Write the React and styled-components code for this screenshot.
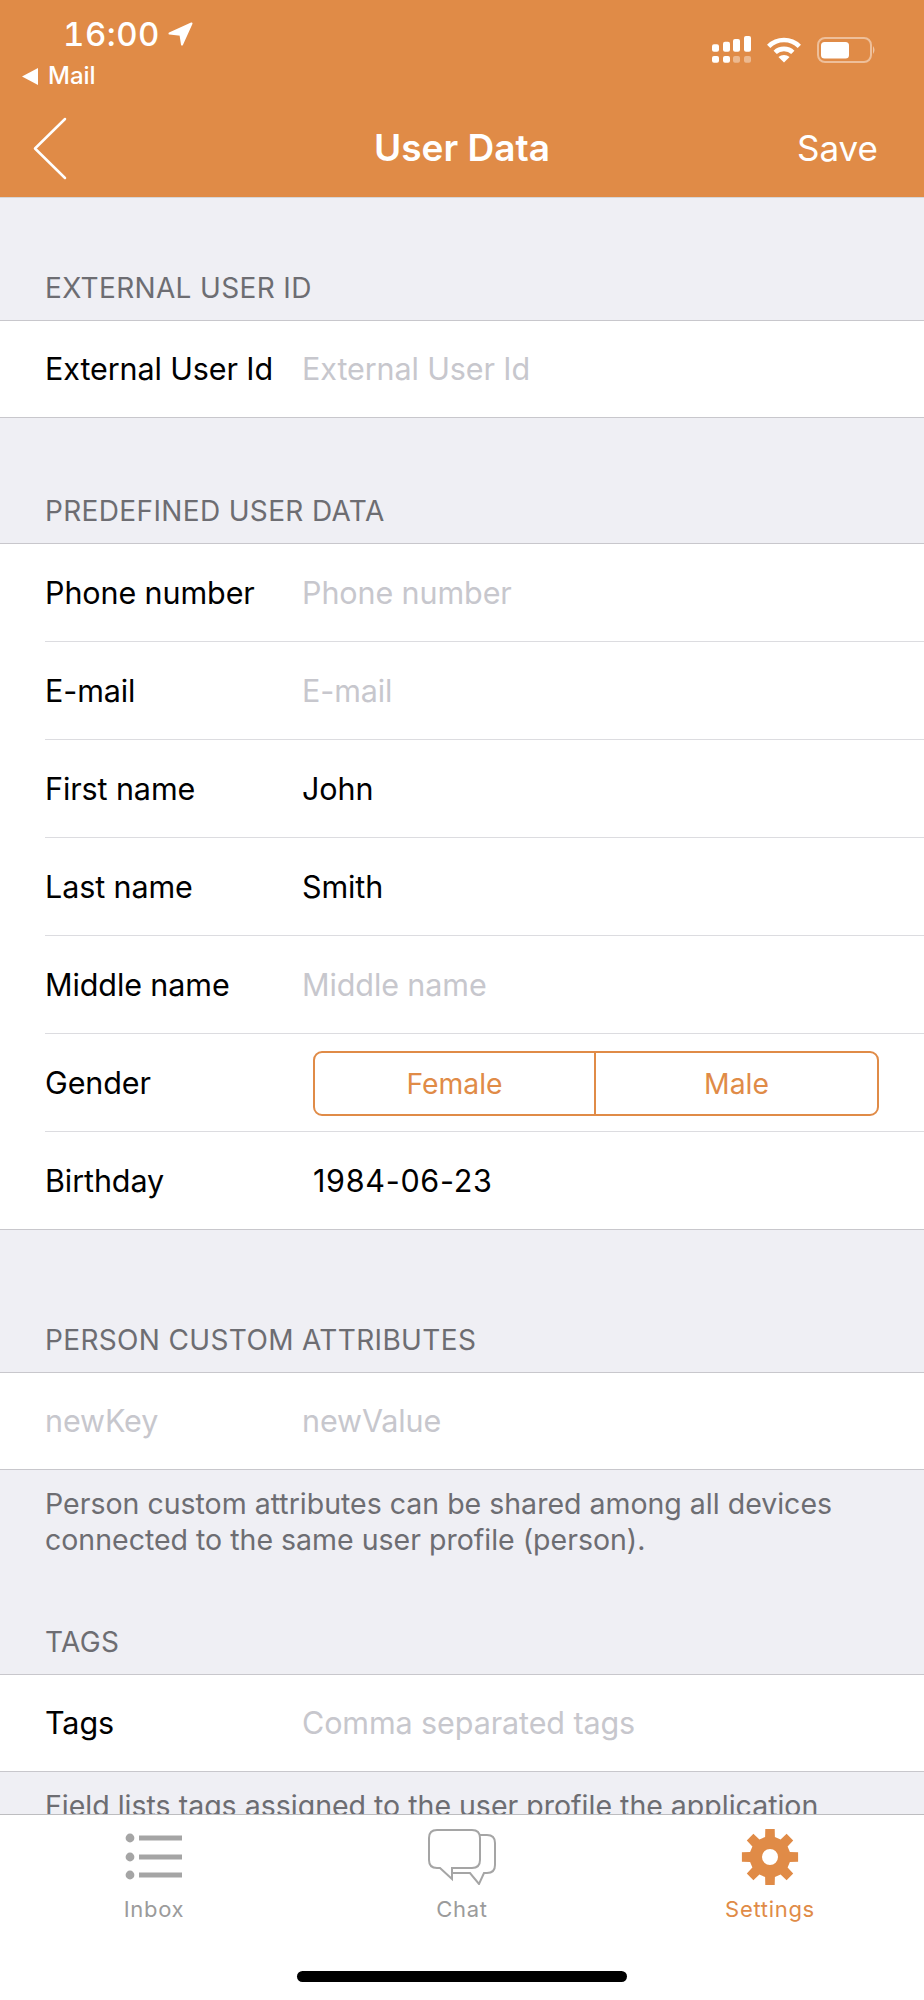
import React from "react";
import styled, { createGlobalStyle } from "styled-components";

const GlobalStyle = createGlobalStyle`
  html, body { margin: 0; padding: 0; background: #fff; }
  body { font-family: Inter, "Liberation Sans", sans-serif; }
`;

const orange = "#e08b47";

const Screen = styled.div`
  width: 924px;
  height: 2000px;
  display: flex;
  flex-direction: column;
  overflow: hidden;
  background: #efeff4;
`;

const Header = styled.header`
  height: 198px;
  flex: none;
  background: ${orange};
  color: #fff;
  border-bottom: 1px solid #d6d6d8;
  box-sizing: border-box;
  display: flex;
  flex-direction: column;
`;

const StatusBar = styled.div`
  height: 99px;
  flex: none;
  display: flex;
  justify-content: space-between;
`;

const TimeCol = styled.div`
  padding: 15px 0 0 22px;
`;

const Time = styled.div`
  display: flex;
  align-items: center;
  gap: 8px;
  padding-left: 41px;
  font-size: 33px;
  line-height: 38px;
  font-weight: 500;
  letter-spacing: 0.5px;
  font-variant-numeric: tabular-nums;
`;

const BackApp = styled.div`
  display: flex;
  align-items: center;
  gap: 10px;
  margin-top: 10px;
  font-size: 24px;
  line-height: 26px;
  font-weight: 500;
`;

const StatusIcons = styled.div`
  display: flex;
  align-items: center;
  gap: 15px;
  height: 27px;
  padding: 36px 48px 0 0;
`;

const NavBar = styled.div`
  flex: 1;
  display: flex;
  align-items: center;
  justify-content: space-between;
  padding: 0 46px 0 33px;
  position: relative;
`;

const NavTitle = styled.div`
  position: absolute;
  left: 0;
  right: 0;
  top: 28px;
  text-align: center;
  font-size: 37px;
  line-height: 42px;
  font-weight: 600;
`;

const SaveLabel = styled.div`
  font-size: 35px;
  line-height: 42px;
`;

const Content = styled.main`
  flex: 1;
  overflow: hidden;
`;

const SectionLabel = styled.div`
  height: ${(p) => p.$height}px;
  box-sizing: border-box;
  display: flex;
  align-items: flex-end;
  padding: 0 45px 16px;
  font-size: 28px;
  line-height: 32px;
  color: #6d6d72;
  letter-spacing: 0.35px;
`;

const Group = styled.div`
  background: #fff;
  border-top: 1px solid #c8c7cc;
  border-bottom: 1px solid #c8c7cc;
`;

const Row = styled.div`
  height: ${(p) => (p.$tall ? 97 : 96)}px;
  box-sizing: border-box;
  display: flex;
  align-items: center;
  margin-left: 45px;
  padding-bottom: 1px;
  & + & {
    border-top: 1px solid #dcdce0;
    height: 98px;
  }
`;

const Label = styled.div`
  width: 257px;
  flex: none;
  font-size: 30.5px;
  letter-spacing: -0.1px;
  color: ${(p) => (p.$placeholder ? "#c7c7cd" : "#000")};
`;

const Value = styled.div`
  font-size: 30.5px;
  letter-spacing: ${(p) => (p.$inset ? "0.7px" : "-0.1px")};
  color: ${(p) => (p.$placeholder ? "#c7c7cd" : "#000")};
  padding-left: ${(p) => (p.$inset ? "11px" : "0")};
`;

const Segments = styled.div`
  margin: 3px 0 0 11px;
  width: 566px;
  height: 65px;
  box-sizing: border-box;
  display: grid;
  grid-template-columns: 279px 1fr;
  border: 2px solid ${orange};
  border-radius: 9px;
`;

const Segment = styled.div`
  display: flex;
  align-items: center;
  justify-content: center;
  font-size: 28.3px;
  color: ${orange};
  & + & {
    border-left: 2px solid ${orange};
  }
`;

const Note = styled.div`
  padding: 16px 45px 0;
  font-size: 28.5px;
  line-height: 36px;
  color: #6d6d72;
`;

const TabBar = styled.nav`
  height: 186px;
  flex: none;
  box-sizing: border-box;
  background: #fff;
  border-top: 1px solid #bdbdc0;
  position: relative;
  display: grid;
  grid-template-columns: repeat(3, 1fr);
`;

const Tab = styled.div`
  display: flex;
  flex-direction: column;
  align-items: center;
  color: ${(p) => (p.$active ? orange : "#9b9b9b")};
`;

const TabIcon = styled.div`
  height: 58px;
  margin-top: 13px;
  display: flex;
  align-items: center;
`;

const TabLabel = styled.div`
  margin-top: 9px;
  font-size: 22px;
  line-height: 28px;
  letter-spacing: 0.7px;
`;

const HomeBar = styled.div`
  position: absolute;
  left: 297px;
  bottom: 18px;
  width: 330px;
  height: 11px;
  border-radius: 6px;
  background: #000;
`;

const LocationIcon = () => (
  <svg width="25" height="24" viewBox="0 0 25 24">
    <path d="M23.5 1.5 L1.5 11.5 L12.5 12.8 L14 22.5 Z" fill="#fff" stroke="#fff" strokeWidth="2" strokeLinejoin="round" />
  </svg>
);

const BackTriangle = () => (
  <svg width="16" height="17" viewBox="0 0 16 17">
    <path d="M16 0 V17 L0 8.5 Z" fill="#fff" />
  </svg>
);

const SignalIcon = () => (
  <svg width="39" height="27" viewBox="0 0 39 27" fill="#fff">
    <rect x="0" y="8.3" width="7" height="7.4" rx="2" />
    <rect x="11" y="5.7" width="7" height="10" rx="2" />
    <rect x="21" y="3" width="7" height="12.7" rx="2" />
    <rect x="32" y="0" width="7" height="15.7" rx="2" />
    <rect x="0" y="20" width="7" height="6.7" rx="2" />
    <rect x="11" y="20" width="7" height="6.7" rx="2" />
    <rect x="21" y="20" width="7" height="6.7" rx="2" opacity="0.4" />
    <rect x="32" y="20" width="7" height="6.7" rx="2" opacity="0.4" />
  </svg>
);

const WifiIcon = () => (
  <svg width="36" height="26" viewBox="0 0 37 28" fill="none" stroke="#fff" strokeWidth="5">
    <path d="M2 10 C11 1 26 1 35 10" />
    <path d="M9 16.5 C14 11.5 23 11.5 28 16.5" />
    <path d="M18.5 27.5 L12.5 21.5 C16 18.6 21 18.6 24.5 21.5 Z" fill="#fff" stroke="none" />
  </svg>
);

const BatteryIcon = () => (
  <svg width="59" height="26" viewBox="0 0 59 26">
    <rect x="1" y="1" width="53" height="24" rx="7" fill="none" stroke="#fff" strokeOpacity="0.45" strokeWidth="2" />
    <rect x="4" y="5" width="28" height="16.5" rx="3.5" fill="#fff" />
    <path d="M56 9 Q59 13 56 17 Z" fill="#fff" fillOpacity="0.5" />
  </svg>
);

const BackChevron = () => (
  <svg width="34" height="63" viewBox="0 0 34 63" fill="none" stroke="#fff" strokeWidth="2.5" strokeLinecap="round" strokeLinejoin="round">
    <path d="M32 2 L2 31.5 L32 61" />
  </svg>
);

const InboxIcon = () => (
  <svg width="58" height="50" viewBox="0 0 58 50" fill="#a5a5a5">
    <circle cx="5" cy="6" r="4.4" />
    <circle cx="5" cy="25" r="4.4" />
    <circle cx="5" cy="43" r="4.4" />
    <rect x="14" y="3.5" width="43" height="5" />
    <rect x="14" y="22.5" width="43" height="5" />
    <rect x="14" y="40.5" width="43" height="5" />
  </svg>
);

const ChatIcon = () => (
  <svg width="68" height="56" viewBox="0 0 68 56" fill="none" stroke="#a5a5a5" strokeWidth="2">
    <path d="M9 1 H44 Q52 1 52 9 V31 Q52 39 44 39 H24 V50 L12 39 H9 Q1 39 1 31 V9 Q1 1 9 1 Z" />
    <path d="M52 6 H59 Q67 6 67 14 V36 Q67 44 59 44 H56 L51 55 L42 44 H24" />
  </svg>
);

const gearPath = (() => {
  // eight tooth cog around the centre, computed once
  const pts = [];
  const teeth = 8;
  for (let i = 0; i < teeth; i++) {
    const a = (i / teeth) * Math.PI * 2 - Math.PI / 2;
    const step = Math.PI / teeth;
    const at = (r, d) => `${(29 + r * Math.cos(a + d)).toFixed(1)} ${(29 + r * Math.sin(a + d)).toFixed(1)}`;
    pts.push(at(20.5, -step * 0.62), at(28.5, -step * 0.42), at(28.5, step * 0.42), at(20.5, step * 0.62));
  }
  return `M${pts.join(" L")} Z M29 21 A8 8 0 1 0 29 37 A8 8 0 1 0 29 21 Z`;
})();

const GearIcon = () => (
  <svg width="58" height="58" viewBox="0 0 58 58">
    <path d={gearPath} fill={orange} fillRule="evenodd" />
  </svg>
);

const App = () => (
  <>
    <GlobalStyle />
    <Screen>
      <Header>
        <StatusBar>
          <TimeCol>
            <Time>
              16:00 <LocationIcon />
            </Time>
            <BackApp>
              <BackTriangle /> Mail
            </BackApp>
          </TimeCol>
          <StatusIcons>
            <SignalIcon />
            <WifiIcon />
            <BatteryIcon />
          </StatusIcons>
        </StatusBar>
        <NavBar>
          <BackChevron />
          <NavTitle>User Data</NavTitle>
          <SaveLabel>Save</SaveLabel>
        </NavBar>
      </Header>

      <Content>
        <SectionLabel $height={122}>EXTERNAL USER ID</SectionLabel>
        <Group>
          <Row>
            <Label>External User Id</Label>
            <Value $placeholder>External User Id</Value>
          </Row>
        </Group>

        <SectionLabel $height={125}>PREDEFINED USER DATA</SectionLabel>
        <Group>
          <Row $tall>
            <Label>Phone number</Label>
            <Value $placeholder>Phone number</Value>
          </Row>
          <Row>
            <Label>E-mail</Label>
            <Value $placeholder>E-mail</Value>
          </Row>
          <Row>
            <Label>First name</Label>
            <Value>John</Value>
          </Row>
          <Row>
            <Label>Last name</Label>
            <Value>Smith</Value>
          </Row>
          <Row>
            <Label>Middle name</Label>
            <Value $placeholder>Middle name</Value>
          </Row>
          <Row>
            <Label>Gender</Label>
            <Segments>
              <Segment>Female</Segment>
              <Segment>Male</Segment>
            </Segments>
          </Row>
          <Row>
            <Label>Birthday</Label>
            <Value $inset>1984-06-23</Value>
          </Row>
        </Group>

        <SectionLabel $height={142}>PERSON CUSTOM ATTRIBUTES</SectionLabel>
        <Group>
          <Row>
            <Label $placeholder>newKey</Label>
            <Value $placeholder>newValue</Value>
          </Row>
        </Group>
        <Note>
          Person custom attributes can be shared among all devices
          <br />
          connected to the same user profile (person).
        </Note>

        <SectionLabel $height={116}>TAGS</SectionLabel>
        <Group>
          <Row>
            <Label>Tags</Label>
            <Value $placeholder>Comma separated tags</Value>
          </Row>
        </Group>
        <Note>Field lists tags assigned to the user profile the application</Note>
      </Content>

      <TabBar>
        <Tab>
          <TabIcon>
            <InboxIcon />
          </TabIcon>
          <TabLabel>Inbox</TabLabel>
        </Tab>
        <Tab>
          <TabIcon>
            <ChatIcon />
          </TabIcon>
          <TabLabel>Chat</TabLabel>
        </Tab>
        <Tab $active>
          <TabIcon>
            <GearIcon />
          </TabIcon>
          <TabLabel>Settings</TabLabel>
        </Tab>
        <HomeBar />
      </TabBar>
    </Screen>
  </>
);

export default App;
